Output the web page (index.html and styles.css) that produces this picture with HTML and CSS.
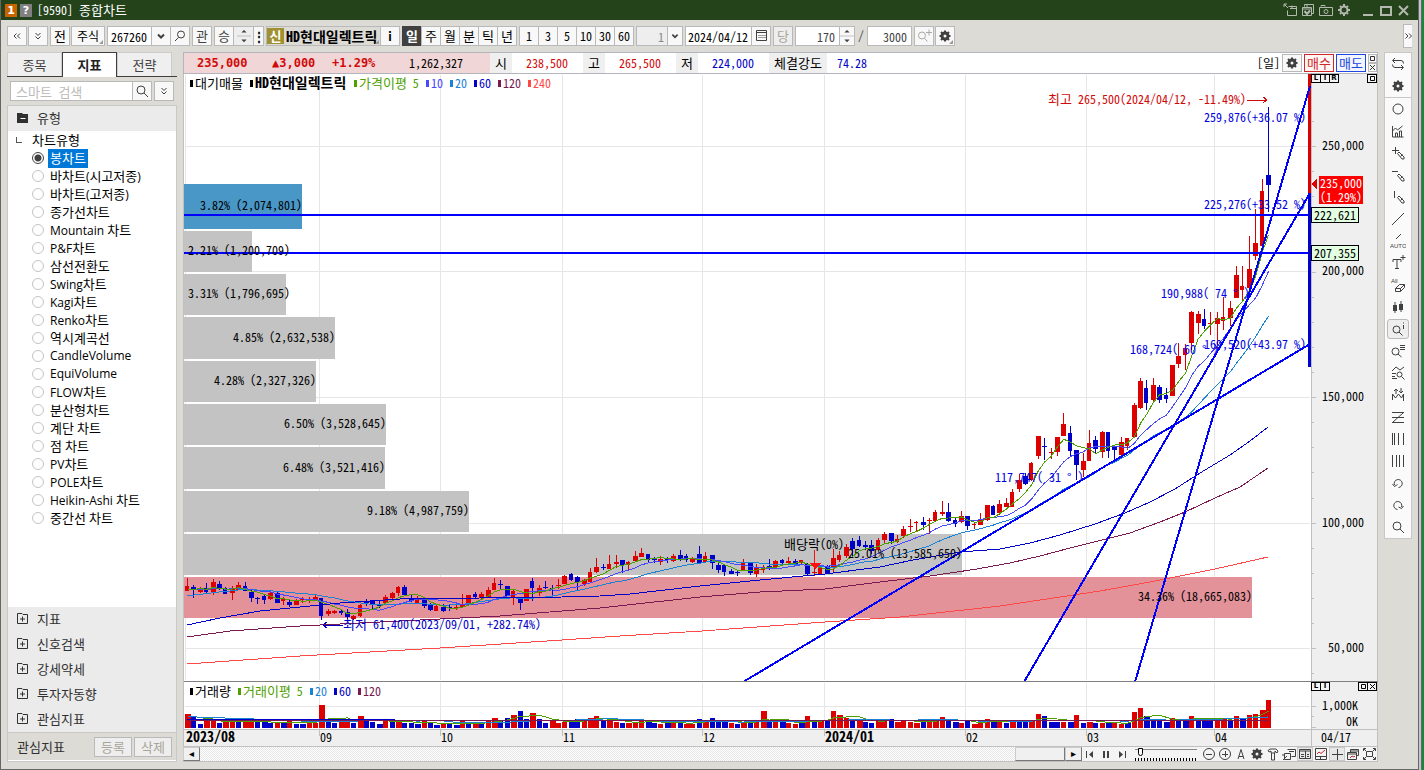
FILE: index.html
```html
<!DOCTYPE html>
<html lang="ko">
<head>
<meta charset="utf-8">
<title>[9590] 종합차트</title>
<link rel="stylesheet" href="styles.css">
</head>
<body>
<svg class="sprite" aria-hidden="true">
  <symbol id="dleft" viewBox="0 0 16 16"><path d="M7.5 5.5 5 8l2.500 2.500M11 5.500 8.500 8l2.500 2.500"/></symbol>
  <symbol id="dright" viewBox="0 0 16 16"><path d="M5.500 5.500 8 8l-2.500 2.500M9 5.500 11.500 8 9 10.500"/></symbol>
  <symbol id="ddown" viewBox="0 0 16 16"><path d="M5.500 5 8 7.500 10.500 5M5.500 8.500 8 11l2.500-2.500"/></symbol>
  <symbol id="down" viewBox="0 0 16 16"><path class="thick" d="M5 6.500 8 9.500 11 6.500"/></symbol>
  <symbol id="find" viewBox="0 0 16 16"><circle cx="7" cy="7" r="4"/><path d="m10 10 4 4"/></symbol>
  <symbol id="findl" viewBox="0 0 16 16"><circle cx="9" cy="6.500" r="3.500"/><path d="m6.500 9.500-3.500 3.500"/></symbol>
  <symbol id="findplus" viewBox="0 0 16 16"><circle cx="6" cy="7.500" r="3.500"/><path d="m8.500 10.500 3 3M10 4.500h6M13 1.500v6"/></symbol>
  <symbol id="gear" viewBox="0 0 16 16"><circle class="gearbody" cx="8" cy="8" r="3"/><path class="thick" d="M8 2.500v2M8 11.500v2M2.500 8h2M11.500 8h2M4 4l1.500 1.500M10.500 10.500 12 12M12 4l-1.500 1.500M5.500 10.500 4 12"/></symbol>
  <symbol id="sun" viewBox="0 0 16 16"><circle class="thick" cx="8" cy="8" r="3.500"/><path class="thick" d="M8 2v2M8 12v2M2 8h2M12 8h2M4 4l1 1M11 11l1 1M12 4l-1 1M5 11l-1 1"/></symbol>
  <symbol id="updown" viewBox="0 0 16 20"><path class="fill" d="m8 3 3 3H5zM8 17l3-3H5z"/><path class="pale" d="M0 10h16"/></symbol>
  <symbol id="cal" viewBox="0 0 16 16"><path d="M3.500 2.500h10v10h-10zM3.500 4.500h10"/><path class="dots" d="M5.500 7.500h7M5.500 9.500h7"/></symbol>
  <symbol id="dock" viewBox="0 0 16 16"><path d="M6.500 4.500h8v9h-9v-5M10 3.500v3M14 6.500H8M2 2l4 4M2 5V2h3"/></symbol>
  <symbol id="copychk" viewBox="0 0 16 16"><path d="M4.500 4.500V2.500h9v9h-2M2.500 5.500h9v8h-9zM3 7h8M7 3v3"/><path class="thick" d="m4.500 9 2.500 3 3-3.500"/></symbol>
  <symbol id="cam" viewBox="0 0 16 16"><path d="M1.500 5.500h13v8h-13zM3 4.500V3.500h4v1"/><circle cx="8" cy="9.500" r="2"/></symbol>
  <symbol id="min" viewBox="0 0 16 16"><path class="bold" d="M3 13h10"/></symbol>
  <symbol id="max" viewBox="0 0 16 16"><path class="bold" d="M3 5h10v8H3z"/></symbol>
  <symbol id="close" viewBox="0 0 16 16"><path class="bold" d="m3 4 9 9M12 4l-9 9"/></symbol>
  <symbol id="swap" viewBox="0 0 16 16"><path d="m5 2-2.500 2.500L5 7M3 4.500h8q2.500 0 2.500 3M11 9l2.500 2.500L11 14M13 11.500H5q-2.500 0-2.500-3"/></symbol>
  <symbol id="circle" viewBox="0 0 16 16"><circle cx="8" cy="8" r="5"/></symbol>
  <symbol id="chartbars" viewBox="0 0 16 16"><path d="M2.500 3v11h11M2.500 8l3-3 2 2 5-4M5.500 14v-4h2v4M9.500 14V8h2v6"/></symbol>
  <symbol id="pen" viewBox="0 0 16 16"><path d="m7.500 8.500 1.500-1.500 5 5v2h-2zM10.500 11.500l2-2"/></symbol>
  <symbol id="pluspen" viewBox="0 0 16 16"><use href="#pen"/><path d="M2 5.500h7M5.500 2v7"/></symbol>
  <symbol id="minuspen" viewBox="0 0 16 16"><use href="#pen"/><path d="M2 4.500h6"/></symbol>
  <symbol id="barpen" viewBox="0 0 16 16"><use href="#pen"/><path d="M4.500 2v7"/></symbol>
  <symbol id="line" viewBox="0 0 16 16"><path d="m2 14 12-12"/></symbol>
  <symbol id="auto" viewBox="0 0 16 16"><path d="m6 6 5-5"/><text class="tiny" x="0" y="15">AUTO</text></symbol>
  <symbol id="tplus" viewBox="0 0 16 16"><path d="M3 7V4.500h8V7M7 5v8M5 13.500h4M10.500 2.500h5M13 0v5"/></symbol>
  <symbol id="allerase" viewBox="0 0 16 16"><text class="tiny" x="1" y="6">All</text><path d="m5.500 11.500 4-4h5l-4 4zM5.500 11.500v3h5v-3M10.500 14.500l4-4v-3"/></symbol>
  <symbol id="candles" viewBox="0 0 16 16"><path class="fill" d="M3 6h4v6H3zM9 5h4v6H9z"/><path d="M5 3v11M11 2v11"/></symbol>
  <symbol id="findi" viewBox="0 0 16 16"><circle cx="6.500" cy="8.500" r="3.500"/><path d="m9 11 3.500 3.500M13.500 1.500v1M13.500 4v4"/></symbol>
  <symbol id="findlines" viewBox="0 0 16 16"><circle cx="5.500" cy="8.500" r="3.500"/><path d="m8 11 3.500 3M10 2.500h5M10 4.500h5M10 6.500h5"/></symbol>
  <symbol id="findchart" viewBox="0 0 16 16"><path d="m2 6 4-4 4 3 4-3M2 8.500h4M2 11.500h3M2 13.500h5"/><circle cx="9.500" cy="9.500" r="2.500"/><path d="m11.500 11.500 3 3"/></symbol>
  <symbol id="peaks" viewBox="0 0 16 16"><path d="M2.500 13V7l3 4 3-4 3 4 2-4v7M6 2v5M4 4l2-2 2 2M11 1v5M9 4l2 2 2-2"/></symbol>
  <symbol id="zee" viewBox="0 0 16 16"><path d="M2 3.500h12M2 8.500h12M2 13.500h12M13 4 3 13"/></symbol>
  <symbol id="vbars" viewBox="0 0 16 16"><path d="M2.500 2v12M4.500 2v12M8.500 2v12M13.500 2v12"/></symbol>
  <symbol id="vbars2" viewBox="0 0 16 16"><path d="M2.500 2v12M6.500 2v12M9.500 2v12M13.500 2v12"/></symbol>
  <symbol id="undo" viewBox="0 0 16 16"><path d="M4.500 10a4 4 0 1 1 4 2.500M2.500 9l2 2.500 3-2"/></symbol>
  <symbol id="redo" viewBox="0 0 16 16"><path d="M11.500 10a4 4 0 1 0-4 2.500M8.500 10l3 1.500 2-2.500"/></symbol>
  <symbol id="first" viewBox="0 0 16 16"><path d="M4.500 5v7"/><path class="fill" d="m11 5-4 3.500 4 3.500z"/></symbol>
  <symbol id="pause" viewBox="0 0 16 16"><path class="thick" d="M6 5v7M10 5v7"/></symbol>
  <symbol id="last" viewBox="0 0 16 16"><path d="M11.500 5v7"/><path class="fill" d="m5 5 4 3.500-4 3.500z"/></symbol>
  <symbol id="cminus" viewBox="0 0 16 16"><circle cx="8" cy="8" r="5.500"/><path d="M5 8.500h6"/></symbol>
  <symbol id="cplus" viewBox="0 0 16 16"><circle cx="8" cy="8" r="5.500"/><path d="M5 8.500h6M8.500 5v6"/></symbol>
  <symbol id="aa" viewBox="0 0 16 16"><path d="m5 13 3-9.500L11 13M6 10.500h4"/></symbol>
  <symbol id="hammer" viewBox="0 0 16 16"><path d="M3 4.500 5 3h6l2 2-1 2-2-2v2H6V5L4 6zM6.500 7v7h3V7"/></symbol>
  <symbol id="dock2" viewBox="0 0 16 16"><path d="M6.500 3.500h8v7h-4M3.500 7.500h6v6h-6zM8 5.500h5M2 14l4-4M1 9h3"/></symbol>
  <symbol id="panel" viewBox="0 0 16 16"><path d="M2.500 3.500h11v9h-11zM3 5h10M8.500 5v7M4 8.500h3M10 8.500h2M4 10.500h3M10 10.500h2"/></symbol>
  <symbol id="redchart" viewBox="0 0 16 16"><path d="M2.500 2.500h11v11h-11zM3 10.500h10M7.500 11v2"/><path class="redline" d="m4 8 2-2 2 1.500L12 4"/></symbol>
  <symbol id="cross" viewBox="0 0 16 16"><path d="M3 8.500h11M8.500 3v11"/></symbol>
  <symbol id="wins" viewBox="0 0 16 16"><path d="M5.500 6V3.500h8v6H12M2.500 6.500h9v7h-9zM3 8h8M6 5h7"/><path class="redline" d="m5 12 2-2 2 1 1-1"/></symbol>
  <symbol id="expand" viewBox="0 0 16 16"><path d="M5.500 5.500h6v5h-6zM2.500 5V2.500H5M12 2.500h2.500V5M14.500 11v2.500H12M5 13.500H2.500V11M3 3l2 2M14 3l-2 2M14 13l-2-2M3 13l2-2"/></symbol>
  <symbol id="box" viewBox="0 0 9 9"><path d="M2.500 2.500h4v4h-4z"/></symbol>
  <symbol id="ex" viewBox="0 0 9 9"><path d="m2 2 5 5M7 2 2 7"/></symbol>
  <symbol id="foldplus" viewBox="0 0 12 12"><path d="M.5 10.500v-10H5l1 1h4.500v9zM3 6h5M5.500 3.500v5"/></symbol>
  <symbol id="foldminus" viewBox="0 0 12 12"><path class="fill" d="M0 1h5l1 1h5v9H0z"/><path class="knock" d="M3.500 6.500h5"/></symbol>
</svg>

<div class="frame">
<div class="window">
  <header class="titlebar">
    <span class="badge badge-num">1</span><span class="badge badge-help">?</span>
    <h1 class="title">[9590] <span class="ko">종합차트</span></h1>
    <div class="title-tools">
      <button aria-label="분리"><svg><use href="#dock"/></svg></button>
      <button aria-label="복사"><svg><use href="#copychk"/></svg></button>
      <button aria-label="캡처"><svg><use href="#cam"/></svg></button>
      <button aria-label="설정"><svg><use href="#sun"/></svg></button>
      <button class="wide" aria-label="최소화"><svg><use href="#min"/></svg></button>
      <button aria-label="최대화"><svg><use href="#max"/></svg></button>
      <button aria-label="닫기"><svg><use href="#close"/></svg></button>
    </div>
  </header>

  <div class="toolbar">
    <div class="pair">
      <button class="btn" aria-label="접기"><svg><use href="#dleft"/></svg></button>
      <button class="btn" aria-label="펼치기"><svg><use href="#ddown"/></svg></button>
    </div>
    <div class="pair">
      <button class="btn ko">전</button>
      <button class="btn stockkind corner">주식</button>
    </div>
    <div class="joined">
      <input class="field code" aria-label="종목코드" value="267260">
      <button class="btn" aria-label="목록"><svg><use href="#down"/></svg></button>
      <button class="btn" aria-label="찾기"><svg><use href="#findl"/></svg></button>
    </div>
    <button class="btn soft ko">관</button>
    <div class="joined">
      <button class="btn soft ko">승</button>
      <button class="btn spin" aria-label="이전 다음"><svg class="spin-icon"><use href="#updown"/></svg></button>
      <button class="btn more" aria-label="더보기">⋮</button>
    </div>
    <div class="joined">
      <div class="stock corner"><span class="credit">신</span><strong>HD현대일렉트릭</strong></div>
      <button class="btn info">i</button>
    </div>
    <div class="joined ko">
      <button class="btn on">일</button><button class="btn">주</button><button class="btn">월</button><button class="btn">분</button><button class="btn">틱</button><button class="btn">년</button>
    </div>
    <div class="joined">
      <button class="btn">1</button><button class="btn">3</button><button class="btn">5</button><button class="btn">10</button><button class="btn">30</button><button class="btn">60</button>
    </div>
    <div class="joined">
      <input class="field unit" aria-label="분 단위" value="1" disabled>
      <button class="btn narrow" aria-label="단위 목록"><svg><use href="#down"/></svg></button>
    </div>
    <div class="joined">
      <input class="field date" aria-label="날짜" value="2024/04/12">
      <button class="btn" aria-label="달력"><svg><use href="#cal"/></svg></button>
    </div>
    <button class="btn off ko" disabled>당</button>
    <div class="joined">
      <input class="field count" aria-label="봉 개수" value="170">
      <button class="btn narrow" aria-label="증감"><svg class="spin-icon"><use href="#updown"/></svg></button>
    </div>
    <span class="slash">/</span>
    <input class="field count" aria-label="전체 개수" value="3000">
    <div class="pair">
      <button class="btn pale-icon" aria-label="확대"><svg><use href="#findplus"/></svg></button>
      <button class="btn corner" aria-label="설정"><svg><use href="#gear"/></svg></button>
    </div>
    <button class="btn fold" aria-label="더보기"><svg><use href="#dright"/></svg></button>
  </div>

  <main class="work">
    <aside class="side">
      <nav class="tabs">
        <button class="tab">종목</button><button class="tab tab-on">지표</button><button class="tab">전략</button>
      </nav>
      <div class="search">
        <input class="field" aria-label="스마트 검색" placeholder="스마트 검색">
        <button class="btn" aria-label="검색"><svg><use href="#find"/></svg></button>
        <button class="btn apart" aria-label="펼치기"><svg><use href="#ddown"/></svg></button>
      </div>
      <div class="panel">
        <h2 class="section"><svg><use href="#foldminus"/></svg>유형</h2>
        <div class="tree" id="tree">
          <div class="tree-root ko">차트유형</div>
        </div>
        <h2 class="section"><svg><use href="#foldplus"/></svg>지표</h2>
        <h2 class="section"><svg><use href="#foldplus"/></svg>신호검색</h2>
        <h2 class="section"><svg><use href="#foldplus"/></svg>강세약세</h2>
        <h2 class="section"><svg><use href="#foldplus"/></svg>투자자동향</h2>
        <h2 class="section"><svg><use href="#foldplus"/></svg>관심지표</h2>
        <div class="side-foot"><span>관심지표</span><button class="btn off" disabled>등록</button><button class="btn off" disabled>삭제</button></div>
      </div>
    </aside>

    <section class="chart">
      <div class="quote">
        <div class="quote-main"><b class="price">235,000</b><b class="diff">▲3,000</b><b class="rate">+1.29%</b><span class="vol">1,262,327</span></div>
        <span class="tag">시</span><span class="val up">238,500</span>
        <span class="tag">고</span><span class="val up">265,500</span>
        <span class="tag">저</span><span class="val dn">224,000</span>
        <span class="tag wide">체결강도</span><span class="val last dn">74.28</span>
        <div class="quote-tools">
          <span>[일]</span>
          <button class="btn" aria-label="설정"><svg><use href="#gear"/></svg></button>
          <button class="btn trade buy">매수</button>
          <button class="btn trade sell">매도</button>
          <div class="minis"><button aria-label="확대"><svg><use href="#box"/></svg></button><button aria-label="닫기"><svg><use href="#ex"/></svg></button></div>
        </div>
      </div>
      <div class="pane">
        <svg id="price" class="plot" viewBox="183 74 1195 608" role="img" aria-label="가격 차트"></svg>
        <div class="axis-tools"><span><button>L</button><button>I</button><button>R</button></span><span><button aria-label="확대"><svg><use href="#box"/></svg></button></span></div>
      </div>
      <div class="pane">
        <svg id="volume" class="plot" viewBox="183 682 1195 65" role="img" aria-label="거래량 차트"></svg>
        <div class="axis-tools"><span><button>L</button><button>I</button></span><span><button aria-label="확대"><svg><use href="#box"/></svg></button><button aria-label="닫기"><svg><use href="#ex"/></svg></button></span></div>
      </div>
      <div class="bottom">
        <button class="arrow" aria-label="왼쪽">◂</button>
        <div class="track"><div class="thumb"></div></div>
        <button class="arrow" aria-label="오른쪽">▸</button>
        <div class="play">
          <button aria-label="처음"><svg><use href="#first"/></svg></button><button aria-label="일시정지"><svg><use href="#pause"/></svg></button><button aria-label="마지막"><svg><use href="#last"/></svg></button>
        </div>
        <input class="speed" type="range" aria-label="속도" min="0" max="20" value="1">
        <div class="play">
          <button aria-label="축소"><svg><use href="#cminus"/></svg></button><button aria-label="확대"><svg><use href="#cplus"/></svg></button><button aria-label="글꼴"><svg><use href="#aa"/></svg></button><button aria-label="설정"><svg><use href="#gear"/></svg></button><button aria-label="도구"><svg><use href="#hammer"/></svg></button><button aria-label="이동"><svg><use href="#dock2"/></svg></button><button class="pressed" aria-label="정보"><svg><use href="#panel"/></svg></button><button aria-label="차트"><svg><use href="#redchart"/></svg></button><button class="pressed" aria-label="십자선"><svg><use href="#cross"/></svg></button><button aria-label="창"><svg><use href="#wins"/></svg></button><button aria-label="전체"><svg><use href="#expand"/></svg></button>
        </div>
      </div>
    </section>

    <nav class="draw" id="draw" aria-label="그리기 도구"></nav>
  </main>
</div>
</div>
<script src="app.js"></script>
</body>
</html>
```

FILE: styles.css
```css
* { box-sizing: border-box; }
:root {
  --ui: "Noto Sans Mono CJK KR", "Liberation Mono", "Noto Sans CJK KR", monospace;
  --bg: #dcdbd6;
  --line: #b9b9b9;
  --soft: #ebebeb;
  --ink: #404040;
}
body {
  margin: 0;
  background: #c4c7c9;
  border-right: 2px solid #128a3c;
  font: 12px/16px var(--ui);
  color: #000;
}
button, input { font: inherit; color: inherit; margin: 0; padding: 0; border-radius: 0; }
button { background: none; border: 0; display: inline-flex; align-items: center; justify-content: center; }
h1, h2 { margin: 0; font: inherit; }
.ko { font-size: 13px; }
.sprite { display: none; }
svg { width: 16px; height: 16px; flex: none; }
symbol, .plot { overflow: hidden; }
symbol path, symbol circle { fill: none; stroke: currentColor; stroke-width: 1; }
symbol .thick { stroke-width: 2; }
symbol .bold { stroke-width: 2; }
symbol .fill { fill: currentColor; stroke: none; }
symbol .gearbody { stroke-width: 3; }
symbol .pale { stroke: var(--line); }
symbol .dots { stroke-dasharray: 1 1; }
symbol .redline { stroke: #c82030; }
symbol .knock { stroke: #fff; }
symbol .tiny { font: 6px "Liberation Sans", sans-serif; fill: currentColor; }

.frame { border-right: 1px solid #666; padding-right: 2px; }
.window {
  min-height: calc(100vh - 1px);
  display: flex;
  flex-direction: column;
  background: var(--bg);
  border: solid #666;
  border-width: 0 1px 1px;
}
.titlebar { display: flex; align-items: center; height: 20px; padding: 0 4px; background: #24431b; color: #fff; }
.badge { width: 12px; height: 13px; margin-right: 3px; text-align: center; font: bold 11px/13px "DejaVu Sans", sans-serif; }
.badge-num { background: #c86400; }
.badge-help { background: #808080; }
.title { margin-left: 2px; flex: 1; }
.title-tools { display: flex; gap: 2px; color: #b4b9b0; padding-right: 2px; }
.title-tools .wide { margin-left: 6px; }

.toolbar { display: flex; align-items: center; gap: 2px; height: 32px; padding: 0 6px; }
.pair { display: flex; gap: 1px; }
.joined { display: flex; }
.joined > * + * { margin-left: -1px; }
.btn { width: 20px; height: 20px; border: 1px solid var(--line); background: #f8f8f8; white-space: nowrap; flex: none; }
.btn svg { color: var(--ink); }
.field { width: 44px; height: 20px; border: 1px solid var(--line); background: #fff; min-width: 0; }
.corner { position: relative; }
.corner::after { content: ""; position: absolute; right: 1px; bottom: 1px; border: 2px solid; border-color: transparent #999 #999 transparent; }
.stockkind { width: 34px; }
.code { width: 45px; padding-left: 3px; }
.soft { color: #444; }
.spin { width: 21px; background: #eee; }
.spin-icon { width: 14px; height: 18px; }
.more { width: 11px; font-weight: bold; }
.stock { display: flex; align-items: center; width: 115px; height: 20px; border: 1px solid var(--line); overflow: hidden; white-space: nowrap; font-size: 14px; }
.credit { width: 17px; height: 16px; margin-right: 2px; background: #a09030; color: #fff; text-align: center; font-weight: bold; font-size: 13px; flex: none; }
.info { font-weight: bold; }
.on { background: #404040; border-color: #404040; color: #fff; font-weight: bold; }
.unit { width: 32px; padding-right: 3px; text-align: right; background: #eee; color: #888; }
.narrow { width: 16px; }
.narrow svg { width: 14px; }
.date { width: 67px; padding-left: 2px; }
.off { background: #eee; color: #a8a598; }
.count { width: 45px; padding-right: 4px; text-align: right; color: #444; }
.slash { width: 8px; text-align: center; color: #444; }
.pale-icon svg { color: #aaa; }
.fold { width: 9px; height: 24px; margin-left: auto; border-right: 0; overflow: hidden; }

.work { flex: 1; display: grid; grid-template-columns: 170px minmax(0, 1fr) 28px; gap: 6px; padding: 0 6px 7px; }
.side { display: flex; flex-direction: column; color: #303030; font-size: 13px; }
.tabs { display: flex; height: 25px; border-bottom: 1px solid #404040; }
.tab { width: 55px; height: 24px; background: #efefef; border: 1px solid #ccc; border-bottom: 0; color: #444; }
.tab-on { height: 25px; background: #fff; border-color: #404040; color: #222; font-weight: bold; }
.search { display: flex; padding: 4px 3px; }
.search .field { flex: 1; padding-left: 5px; }
.search .field::placeholder { color: #bbb; opacity: 1; }
.search .btn { margin-left: -1px; }
.search .apart { margin-left: 2px; }
.panel { flex: 1; display: flex; flex-direction: column; border: 1px solid #c8c8c8; background: #fff; }
.section { display: flex; align-items: center; gap: 8px; height: 25px; padding: 0 0 2px 9px; background: var(--soft); }
.section svg { width: 12px; height: 12px; }
.tree { flex: 1; font: 12px/18px "Open Sans", "Noto Sans Mono CJK KR", "Noto Sans CJK KR", sans-serif; color: #000; }
.tree-root { padding-left: 24px; position: relative; }
.tree-root::before { content: ""; position: absolute; left: 8px; top: 6px; width: 5px; height: 5px; border: solid #555; border-width: 0 0 1px 1px; }
.tree label { display: flex; align-items: center; height: 18px; padding-left: 24px; }
.tree input { appearance: none; width: 12px; height: 12px; border: 1px solid #c4c4c4; border-radius: 50%; margin-right: 4px; background: #fff; }
.tree input:checked { border-color: #444; background: radial-gradient(circle, #404040 0 3px, #fff 4px); }
.tree .name { padding: 0 2px; white-space: pre; }
.tree input:checked + .name { background: #0078d7; color: #fff; }
.side-foot { display: flex; align-items: center; gap: 2px; height: 29px; padding: 0 4px 0 9px; background: var(--bg); border-top: 1px solid #c8c8c8; border-bottom: 1px solid #fff; }
.side-foot span { flex: 1; }
.side-foot .btn { width: 38px; }

.chart { display: flex; flex-direction: column; align-self: start; border-bottom: 1px solid #c0c0c0; min-width: 0; }
.quote { display: flex; align-items: center; height: 22px; border: 1px solid #b3b5bd; background: #fff; line-height: 20px; }
.quote-main { display: flex; width: 306px; padding-left: 13px; background: #f0d6d6; }
.quote b { font: bold 12px/20px "DejaVu Sans Mono", monospace; color: #d00a0a; }
.price { width: 75px; }
.diff { width: 60px; }
.rate { width: 77px; }
.tag { width: 22px; background: #efefef; text-align: center; font-size: 13px; }
.tag.wide { width: 58px; }
.val { width: 71px; padding-left: 14px; }
.val.last { padding-left: 10px; }
.up { color: #d00a0a; }
.dn { color: #0000c8; }
.quote-tools { display: flex; align-items: center; gap: 2px; margin-left: auto; }
.quote-tools .btn { height: 18px; }
.quote-tools .trade { width: 30px; font-size: 13px; }
.quote-tools .buy { color: #d02828; border-color: #d02828; background: #fff6f6; }
.quote-tools .sell { color: #2048e0; border-color: #2048e0; background: #f4f6ff; }
.minis { display: flex; flex-direction: column; }
.minis button { width: 9px; height: 9px; border: 1px solid var(--line); background: #f8f8f8; color: #333; }
.minis svg, .axis-tools svg { width: 9px; height: 9px; }

.pane { position: relative; line-height: 0; }
.plot { display: block; width: 100%; height: auto; font: 12px var(--ui); }
.plot text { white-space: pre; }
.axis-tools { position: absolute; top: 0; right: 1px; width: 65px; display: flex; justify-content: space-between; }
.axis-tools span { display: flex; }
.axis-tools button { width: 10px; height: 9px; margin-left: -1px; border: 1px solid #000; font: bold 7px/7px "DejaVu Sans", sans-serif; background: #f4f4f4; }
.crisp { shape-rendering: crispEdges; }
.strong { font-weight: bold; font-size: 14px; }
.strong .ko { font-size: 14px; }
.red { fill: #d00a0a; }
.blue { fill: #0000e0; }
.navy { fill: #0000c8; }
.white { fill: #fff; }

.bottom { display: flex; align-items: center; height: 14px; background: #f4f4f4; border-right: 1px solid #c0c0c0; }
.arrow { width: 17px; height: 14px; border: 1px outset #ccc; background: #f0f0f0; font: 10px/10px "DejaVu Sans", sans-serif; }
.track { flex: 1; height: 14px; background: repeating-conic-gradient(#e6e6e6 0 25%, #fff 0 50%) 0 0 / 2px 2px; display: flex; justify-content: flex-end; }
.thumb { width: 50px; background: #f0f0f0; border: 1px outset #ccc; }
.play { display: flex; color: #404040; }
.play button { height: 14px; }
.play .pressed { background: #e8e8e8; box-shadow: inset 0 0 0 1px #c8c8c8; }
.speed { appearance: none; width: 62px; height: 14px; margin: 0 4px 0 5px; background:
  linear-gradient(#888, #888) 0 2px / 100% 1px no-repeat,
  repeating-linear-gradient(90deg, #000 0 1px, transparent 1px 3px) 0 100% / 100% 3px no-repeat; }
.speed::-webkit-slider-thumb { appearance: none; width: 5px; height: 8px; margin-top: -4px; border: 1px solid #000; border-radius: 0 0 3px 3px; background: #fff; }

.draw { align-self: start; display: flex; flex-direction: column; align-items: center; background: #fafafa; border: 1px solid #c8c8c8; color: #404040; }
.draw button { width: 22px; height: 22px; }
.draw .group-end { width: 26px; height: 23px; border-bottom: 1px solid #c8c8c8; }
.draw .pressed { height: 20px; margin: 1px 0; border: 1px solid #b9b9b9; border-radius: 3px; background: #eee; }
```

FILE: app.js
```js
const kinds = ["봉차트", "바차트(시고저종)", "바차트(고저종)", "종가선차트", "Mountain 차트", "P&amp;F차트", "삼선전환도", "Swing차트", "Kagi차트", "Renko차트", "역시계곡선", "CandleVolume", "EquiVolume", "FLOW차트", "분산형차트", "계단 차트", "점 차트", "PV차트", "POLE차트", "Heikin-Ashi 차트", "중간선 차트"];
/* Hangul runs are set one size larger than the Latin text beside them. */
const hangul = (s, tag) => s.replace(/[가-힣]+/g, run => `<${tag} class="ko">${run}</${tag}>`);

document.getElementById("tree").insertAdjacentHTML("beforeend", kinds.map((name, i) =>
  `<label><input type="radio" name="kind"${i === 0 ? " checked" : ""}><span class="name">${hangul(name, "span")}</span></label>`).join(""));

const tools = ["swap", "gear", "circle", "chartbars", "pluspen", "minuspen", "barpen", "line", "auto", "tplus", "allerase", "candles", "findi", "findlines", "findchart", "peaks", "zee", "vbars", "vbars2", "undo", "redo", "find"];
document.getElementById("draw").innerHTML = tools.map(t =>
  `<button aria-label="${t}" class="${t === "gear" ? "group-end" : t === "findi" ? "pressed" : ""}"><svg><use href="#${t}"/></svg></button>`).join("");

/* Each candle: direction, then high, body top, body bottom, low on the plot's vertical scale. */
const candles = `r578 586 591 591,b585 587 590 598,r587 588 592 593,b583 588 592 594,r579 582 592 595,b581 584 589 590,b587 588 594 594,r586 588 593 600,r582 585 590 590,b582 586 591 591,
b590 592 598 602,b597 598 599 604,b595 596 600 604,r592 593 599 600,b592 593 603 603,r597 599 601 605,b600 602 605 607,r599 601 605 605,r597 599 600 603,r597 599 600 603,
r595 597 601 601,b598 598 616 620,r609 611 614 616,r610 611 613 614,b610 611 613 615,b609 612 617 619,r615 616 619 620,r604 605 616 617,b599 602 603 606,b600 600 605 610,
b601 604 606 608,r595 597 603 604,r592 593 598 599,r586 587 593 596,b585 587 595 595,b595 598 601 602,r596 598 604 604,b597 600 606 608,b603 604 610 611,r605 606 611 611,
b604 607 611 612,b604 607 608 611,r605 607 608 610,r594 604 607 608,r595 595 604 604,b592 594 597 599,r592 594 598 600,r587 590 597 598,r578 583 590 590,b580 584 585 590,
b586 586 596 596,r590 591 598 605,b597 598 603 610,r589 589 601 601,b578 581 588 601,r585 588 593 596,b581 587 588 589,b585 588 589 596,r579 585 586 589,r575 576 584 584,
b573 574 580 581,b576 577 582 590,r579 580 584 586,r568 572 582 583,r558 567 572 573,b564 567 568 570,r555 564 569 569,r555 562 564 568,b560 560 565 573,r561 562 565 571,
r551 556 561 562,r548 553 557 557,b554 554 560 562,b557 559 560 563,r556 559 562 565,b557 558 560 563,r554 556 561 562,b550 555 560 561,b554 556 560 562,r557 558 562 563,
b546 554 563 564,r552 556 562 563,b555 555 563 569,b561 565 570 573,b564 565 572 576,b569 571 574 574,b571 572 573 576,r559 562 570 571,b562 562 573 575,r564 568 574 577,
r565 567 570 573,b559 566 567 570,r560 561 567 568,b559 560 563 564,r557 561 563 564,b559 561 564 565,r560 560 563 564,b563 564 574 575,r568 572 573 576,r567 568 574 574,
b565 566 573 574,r549 558 568 572,r551 555 560 562,r544 547 556 558,b538 541 549 557,b536 540 546 547,b541 545 547 550,b540 545 551 554,r538 540 550 551,r532 534 540 544,
b533 533 541 544,r535 539 542 543,r526 529 536 538,r519 526 527 532,r521 522 523 532,b517 522 525 530,r518 520 521 534,r510 512 521 522,r501 512 514 516,b503 512 521 522,
b518 520 524 527,r511 516 522 523,b516 516 526 530,r522 524 525 529,r513 519 525 525,r505 505 520 521,b505 506 515 515,r500 504 513 515,r498 503 507 507,r489 492 507 507,
r474 480 489 492,b473 476 484 485,r462 463 480 481,r436 436 456 459,b438 446 447 460,r448 452 453 459,r437 437 452 456,r413 424 436 436,b426 433 451 456,b450 450 465 480,
r453 461 470 477,r430 443 461 461,b436 440 449 454,r431 432 452 458,b432 432 451 458,b447 447 450 460,r437 442 455 456,r438 438 446 450,r403 405 437 438,r378 381 408 409,
b380 388 403 410,r378 385 400 402,b385 387 400 403,b388 395 399 403,r365 365 396 396,r343 356 364 368,r344 348 355 370,r311 312 343 350,r311 314 323 334,b309 319 326 329,
r312 323 324 335,r312 318 324 350,r297 317 321 330,r301 308 318 326,r266 275 298 298,r266 286 290 300,r236 269 288 294,r209 243 256 260,r179 191 246 253,b107 175 185 212`
  .split(",").map(s => { s = s.trim(); return [s[0], ...s.slice(1).split(" ").map(Number)]; });

/* Volume bar heights; a minus sign marks a falling day. */
const volumes = [14,-11,-4,8,8,-5,6,8,-6,7,6,-6,-6,-5,6,-5,8,-4,-4,5,5,23,-8,-5,6,9,-5,12,-8,-6,-4,8,-6,7,-5,-5,-4,7,-6,-3,4,-4,-3,7,-4,
 4,-5,7,10,-8,-10,13,-17,-9,15,-9,-5,7,5,6,-8,-9,7,10,12,-8,7,6,-5,5,6,7,-8,-5,4,-6,5,-6,4,4,-9,7,-10,-8,-6,5,-4,6,-8,7,
 17,-7,6,-6,5,4,-5,12,-6,7,-8,17,13,10,-9,8,-6,-5,7,9,-9,6,7,6,5,-8,7,8,11,-9,-6,5,-7,4,5,9,-8,
 6,-5,8,-7,-7,7,14,-12,-6,-6,6,-6,13,-5,6,-5,5,-5,6,4,-5,16,20,-12,-8,-8,-6,10,-8,-8,12,-10,-9,-9,10,9,-7,12,-10,13,14,18,28];

const colors = { r: "#dc0000", b: "#0000c8", ma5: "#4ea000", ma10: "#4848ff", ma20: "#1b83d6", ma60: "#0000c8", ma120: "#7a1a50", ma240: "#ff4848" };
const step = 1081 / 169;
const xAt = i => 187.5 + i * step;
const rect = (x, y, w, h, fill, extra = "") => `<rect x="${x}" y="${y}" width="${w}" height="${h}" fill="${fill}" ${extra}/>`;
const line = (pts, stroke, width = 1) => `<polyline points="${pts.map(p => p.join(",")).join(" ")}" fill="none" stroke="${stroke}" stroke-width="${width}"/>`;
const text = (x, y, s, cls = "", anchor = "start") => `<text x="${x}" y="${y}" class="${cls}" text-anchor="${anchor}">${hangul(s, "tspan")}</text>`;
const average = (values, before, n) => {
  const all = before.concat(values);
  return values.map((_, i) => {
    const end = i + before.length + 1;
    const part = all.slice(end - n, end);
    return [xAt(i), part.reduce((a, b) => a + b, 0) / n];
  });
};
const months = [[319, "09"], [440, "10"], [562, "11"], [702, "12"], [824, ""], [965, "02"], [1086, "03"], [1214, "04"]];
const legend = (y, items) => items.map(([x, s, fill, cls = ""]) =>
  rect(x, y - 8, 3, 7, fill) + `<text x="${x + 5}" y="${y}" fill="${fill}" class="${cls}">${hangul(s, "tspan")}</text>`).join("");

function drawPrice() {
  let o = `<g class="crisp">` + rect(183, 74, 1195, 608, "#fff");
  for (const y of [146, 271, 397, 523, 648]) o += rect(185, y, 1125, 1, "#e6e6e6");
  o += rect(185, 75, 1, 605, "#e6e6e6");
  for (const [x] of months) o += rect(x, 75, 1, 605, "#e6e6e6");
  [[184, 45, 302], [231, 41, 252], [274, 41, 286], [317, 42, 335], [361, 41, 316], [404, 41, 386], [447, 42, 385], [491, 41, 469], [534, 41, 962], [577, 41, 1252]]
    .forEach(([y, h, end], i) => { o += rect(184, y, end - 184, h, i === 0 ? "#4897c7" : i === 9 ? "#e3929a" : "#c3c3c3"); });
  candles.forEach(([c, h, t, b, l], i) => {
    const x = Math.floor(xAt(i));
    o += rect(x, h, 1, Math.max(l - h, 1), colors[c]) + rect(x - 2, t, i % 3 ? 5 : 4, Math.max(b - t, 1), colors[c]);
  });
  const close = candles.map(([c, h, t, b]) => c === "r" ? t : b);
  const past = Array(10).fill(603).concat(Array(10).fill(590));
  o += line(average(close, past, 20), colors.ma20) + line(average(close, past, 10), colors.ma10) + line(average(close, past, 5), colors.ma5);
  o += line([[187,625],[220,618],[260,611],[300,607],[340,603],[400,599],[480,598],[562,597],[600,596],[630,594],[700,586],[760,580],[825,574],[880,567],[913,560],[960,552],[1000,549],[1030,543],[1060,535],[1095,524],[1125,513],[1150,502],[1175,489],[1200,473],[1230,455],[1250,441],[1268,427]], colors.ma60);
  o += line([[187,637],[230,631],[300,626],[440,619],[500,616],[562,611],[600,608],[700,597],[760,592],[825,589],[880,582],[930,576],[977,569],[1010,563],[1040,556],[1070,548],[1130,533],[1160,522],[1185,512],[1215,498],[1240,487],[1268,468]], colors.ma120);
  o += line([[187,664],[300,656],[440,648],[562,640],[620,636],[702,631],[825,622],[900,617],[1000,606],[1100,591],[1150,582],[1215,569],[1268,557]], colors.ma240);
  o += rect(814, 550, 1, 14, "#ff1010") + `<path d="M809 563h12l-6 6z" fill="#ff1010"/>`;
  o += rect(184, 214, 1126, 2, "#0000ff") + rect(184, 252, 1126, 2, "#0000ff");
  o += rect(1308, 74, 3, 121, "#dc0000") + rect(1308, 193, 3, 174, "#0000d0");
  o += line([[743, 682], [1310, 344]], "#0000ff", 2) + line([[1024, 682], [1310, 193]], "#0000ff", 2) + line([[1135, 682], [1310, 86]], "#0000ff", 2);
  o += rect(1311, 74, 66, 608, "#efefef") + rect(1311, 74, 1, 608, "#c0c0c0") + rect(1377, 74, 1, 608, "#c0c0c0");
  for (let k = 0; k < 23; k++) o += rect(1312, Math.round(121 + k * 25.1), k % 5 === 1 ? 4 : 2, 1, "#c0c0c0");
  o += rect(183, 681, 1195, 1, "#808080") + rect(183, 74, 1, 608, "#c0c0c0");
  o += rect(1319, 176, 44, 28, "#ff0000") + `<path d="M1317 179v10l-6-5z" fill="#dc0000"/>`;
  o += rect(1311.5, 207.5, 47, 15, "#e2ffe2", 'stroke="#000"') + rect(1311.5, 245.5, 47, 15, "#e2ffe2", 'stroke="#000"');
  o += line([[1247, 100], [1267, 100]], "#d00a0a") + line([[1263, 97], [1267, 100], [1263, 103]], "#d00a0a");
  o += line([[324, 625], [343, 625]], "#0000c8") + line([[327, 622], [323, 625], [327, 628]], "#0000c8") + `</g>`;

  [[302, 210, "3.82% (2,074,801)"], [290, 255, "2.21% (1,200,709)"], [290, 298, "3.31% (1,796,695)"], [335, 342, "4.85% (2,632,538)"], [316, 385, "4.28% (2,327,326)"], [386, 428, "6.50% (3,528,645)"], [385, 472, "6.48% (3,521,416)"], [469, 515, "9.18% (4,987,759)"], [962, 558, "25.01% (13,585,650)"], [1252, 601, "34.36% (18,665,083)"]]
    .forEach(([x, y, s]) => { o += text(x, y, s, "", "end"); });
  o += text(784, 549, "배당락(0%)") + text(343, 629, "최저 61,400(2023/09/01, +282.74%)", "navy") + text(1048, 104, "최고 265,500(2024/04/12, -11.49%)", "red");
  o += text(1204, 122, "259,876(+36.07 %)", "blue") + text(1204, 209, "225,276(+33.52 %)", "blue") + text(1204, 349, "169,520(+43.97 %)", "blue");
  o += text(1161, 298, "190,988( 74 ° )", "blue") + text(1130, 354, "168,724( 60 ° )", "blue") + text(995, 482, "117,747( 31 ° )", "blue");
  [[150, "250,000"], [275, "200,000"], [401, "150,000"], [527, "100,000"], [652, "50,000"]].forEach(([y, s]) => { o += text(1364, y, s, "", "end"); });
  o += text(1362, 188, "235,000", "white", "end") + text(1362, 202, "(1.29%)", "white", "end") + text(1356, 220, "222,621", "", "end") + text(1356, 258, "207,355", "", "end");
  o += legend(88, [[190, "대기매물", "#000"], [250, "HD현대일렉트릭", "#000", "strong"], [354, "가격이평 5", colors.ma5], [426, "10", colors.ma10], [450, "20", colors.ma20], [474, "60", colors.ma60], [498, "120", colors.ma120], [528, "240", colors.ma240]]);
  document.getElementById("price").innerHTML = o;
}

function drawVolume() {
  let o = `<g class="crisp">` + rect(183, 682, 1195, 65, "#fff") + rect(185, 706, 1125, 1, "#e6e6e6");
  for (const [x] of months) o += rect(x, 683, 1, 46, "#e6e6e6");
  volumes.forEach((v, i) => { o += rect(Math.floor(xAt(i)) - 2, 728 - Math.abs(v), i % 3 ? 5 : 6, Math.abs(v), v > 0 ? colors.r : colors.b); });
  const tops = volumes.map(v => 728 - Math.abs(v));
  const past = Array(20).fill(717);
  o += line(average(tops, past, 5), colors.ma5) + line(average(tops, past, 20), colors.ma20);
  o += line([[187, 719], [600, 721], [900, 720], [1268, 720]], colors.ma60) + line([[187, 721], [600, 720], [1268, 720]], colors.ma120);
  o += rect(1311, 682, 66, 65, "#efefef") + rect(183, 730, 1195, 17, "#efefef") + rect(183, 729, 1195, 1, "#c0c0c0") + rect(183, 746, 1195, 1, "#c0c0c0");
  for (const [x] of months) o += rect(x, 730, 1, 6, "#c0c0c0");
  for (const [y, w] of [[706, 4], [716, 2], [727, 4]]) o += rect(1312, y, w, 1, "#c0c0c0");
  o += rect(1311, 682, 1, 65, "#c0c0c0") + rect(1377, 682, 1, 65, "#c0c0c0") + rect(183, 682, 1, 65, "#c0c0c0") + `</g>`;
  months.forEach(([x, s]) => { if (s) o += text(x + 1, 742, s); });
  o += text(186, 742, "2023/08", "strong") + text(825, 742, "2024/01", "strong") + text(1321, 742, "04/17");
  o += text(1358, 710, "1,000K", "", "end") + text(1358, 726, "0K", "", "end");
  o += legend(696, [[190, "거래량", "#000"], [238, "거래이평 5", colors.ma5], [310, "20", colors.ma20], [334, "60", colors.ma60], [358, "120", colors.ma120]]);
  document.getElementById("volume").innerHTML = o;
}
drawPrice();
drawVolume();
```
